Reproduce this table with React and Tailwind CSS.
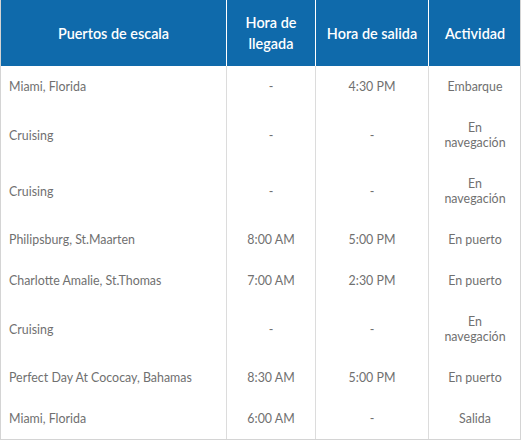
import React from "react";

const rows = [
  { port: "Miami, Florida", arrive: "-", depart: "4:30 PM", activity: "Embarque" },
  { port: "Cruising", arrive: "-", depart: "-", activity: "En navegación", two: true },
  { port: "Cruising", arrive: "-", depart: "-", activity: "En navegación", two: true },
  { port: "Philipsburg, St.Maarten", arrive: "8:00 AM", depart: "5:00 PM", activity: "En puerto" },
  { port: "Charlotte Amalie, St.Thomas", arrive: "7:00 AM", depart: "2:30 PM", activity: "En puerto" },
  { port: "Cruising", arrive: "-", depart: "-", activity: "En navegación", two: true },
  { port: "Perfect Day At Cococay, Bahamas", arrive: "8:30 AM", depart: "5:00 PM", activity: "En puerto" },
  { port: "Miami, Florida", arrive: "6:00 AM", depart: "-", activity: "Salida" },
];

const cols = "grid grid-cols-[226px_89px_113px_92px]";

const App = () => {
  return (
    <div className="w-[522px] h-[440px] bg-white" style={{ fontFamily: "Lato, 'Open Sans', sans-serif" }}>
      <div className="w-[521px] border-l border-r border-b border-[#d4d4d4]">
        {/* header */}
        <div className={`${cols} h-[66px] bg-[#0f6aab] text-white text-[14.4px] font-semibold leading-[21px]`}>
          <div className="flex items-center justify-center border-r border-white">Puertos de escala</div>
          <div className="flex items-center justify-center text-center border-r border-white">
            Hora de
            <br />
            llegada
          </div>
          <div className="flex items-center justify-center border-r border-white whitespace-nowrap">Hora de salida</div>
          <div className="flex items-center justify-center">Actividad</div>
        </div>

        {/* body */}
        {rows.map((r, i) => (
          <div key={i} className={`${cols} text-[12.4px] leading-[15px] text-[#707070]`}>
            <div className="flex items-center px-2 py-[13px] border-r border-[#dcdcdc] whitespace-nowrap">{r.port}</div>
            <div className="flex items-center justify-center py-[13px] border-r border-[#dcdcdc]">{r.arrive}</div>
            <div className="flex items-center justify-center py-[13px] border-r border-[#dcdcdc]">{r.depart}</div>
            <div className="flex items-center justify-center text-center py-[13px]">
              {r.two ? (
                <span>
                  En
                  <br />
                  navegación
                </span>
              ) : (
                r.activity
              )}
            </div>
          </div>
        ))}
      </div>
    </div>
  );
};

export default App;
